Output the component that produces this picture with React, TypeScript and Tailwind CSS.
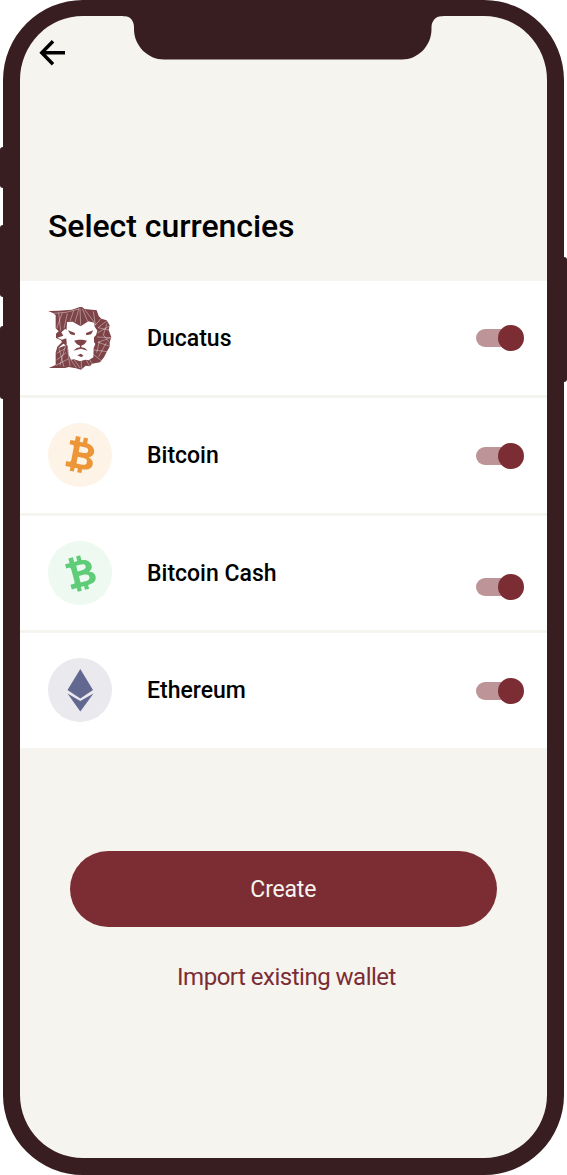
import type { ReactNode } from 'react';

function Lion() {
  return (
    <svg viewBox="24 36 192 192" className="size-16 shrink-0">
      <path
        fill="#7d4347"
        d="M25 51L56 50L96 47L119 39L126 39L134 45L170 49L176 66L184 74L200 79L209 94L206 108L214 130L209 144V158L200 174L192 190L180 205L156 209L150 217L137 215L123 227L108 223L86 219L75 222H26L47 213V176L52 158L66 144L62 138L48 132V119L56 112L47 103V64L40 58Z"
      />
      <g fill="#fff">
        <path d="M81 84L98 83L122 97L145 82L163 86V96L172 110L168 124L162 130V144L166 150L161 162L160 190L146 199L136 197L120 202L102 196L93 197L86 182L84 160L80 150V130L76 116L80 104Z" />
        <path d="M76 104L64 115L70 125L52 131L66 137L79 133L82 150L77 154L70 149L54 163L72 156L82 152L80 110Z" />
      </g>
      <g fill="#7d4347">
        <path d="M84 109L105 117L104 124L91 121Z" />
        <path d="M160 109L138 117L139 124L153 121Z" />
        <path d="M102 140L115 137H128L141 140L133 151L124 155V160L134 162L143 170L123 164L100 170L110 162L120 160V155L111 151Z" />
        <path d="M112 184L123 179L131 186L123 189Z" />
      </g>
      <g fill="none" stroke="#fff" strokeWidth="1.9" opacity=".62">
        <path d="M40 58L78 55L116 45M67 56L50 103M56 56L62 110M82 58L72 103M101 50L90 82M117 43L105 84M120 43L122 95M127 44L143 82M134 47L162 84M160 52L166 93M182 75L163 96M200 81L174 101L207 108M172 117L209 96M171 129L212 131L174 145L207 156M201 88L190 123L206 143M178 142L170 176M199 146L176 188M162 168L202 173M160 181L184 200M150 198L155 209M139 199L149 216M124 201V224M103 198L120 222M92 197L109 221M82 160L90 217M76 156L60 214M50 178L75 164M50 198L78 176M57 163L72 219M48 214L86 194" />
      </g>
    </svg>
  );
}

function BitcoinGlyph() {
  return (
    <path
      fillRule="evenodd"
      d="M-9 -18H-4V-13H-.500V-18H4V-13C10 -12 13 -9 13 -5C13 -2 11 0 8.500 1C12 2 14 4 14 7C14 12 10 14 4 14V18H-.500V14H-4V18H-8.500V14H-14V9H-11C-9.500 9 -9 8.500 -9 7V-6C-9 -8 -10 -8.500 -11 -8.500H-14V-13H-9ZM-3 -8.500V-2.500H1C4.500 -2.500 6.500 -3 6.500 -5.500C6.500 -8 4.500 -8.500 1 -8.500ZM-3 2.500V9.500H2C6 9.500 7.500 8.500 7.500 6C7.500 3.500 6 2.500 2 2.500Z"
    />
  );
}

function Bitcoin() {
  return (
    <svg viewBox="0 0 64 64" className="size-16 shrink-0">
      <circle cx="32" cy="32" r="32" fill="#fdf3e7" />
      <g transform="translate(33 32) rotate(11) scale(.95 .98)" fill="#ec9638"><BitcoinGlyph /></g>
    </svg>
  );
}

function BitcoinCash() {
  return (
    <svg viewBox="0 0 64 64" className="size-16 shrink-0">
      <circle cx="32" cy="32" r="32" fill="#edf9f1" />
      <g transform="translate(33 32) rotate(-15) scale(.94 .96)" fill="#5fcc78"><BitcoinGlyph /></g>
    </svg>
  );
}

function Ethereum() {
  return (
    <svg viewBox="0 0 64 64" className="size-16 shrink-0">
      <circle cx="32" cy="32" r="32" fill="#eae9ee" />
      <path d="M32.300 11L45 32L32.300 40.500L19.500 32Z" fill="#626890" />
      <path d="M19.500 35.500L32.300 43L45.500 35.500L32.300 53.500Z" fill="#626890" />
    </svg>
  );
}

function Toggle() {
  return (
    <div className="flex h-[27px] w-12 items-center justify-end rounded-full">
      <div className="-mr-[13px] h-[18px] w-[35px] rounded-l-full bg-[#bd9497]" />
      <div className="size-[26px] shrink-0 rounded-full bg-[#7c2d34]" />
    </div>
  );
}

function Row({ icon, name, low }: { icon: ReactNode; name: string; low?: boolean }) {
  return (
    <li className="flex h-[114.500px] items-center bg-white pr-[23px] pl-7">
      {icon}
      <span className="ml-[35px] flex-1 pt-0.5 text-[23px] leading-7 font-medium text-black">{name}</span>
      <div className={low ? 'pt-7' : 'pt-px'}><Toggle /></div>
    </li>
  );
}

export default function App() {
  return (
    <div className="relative h-[1175px] w-[567px] overflow-hidden bg-white font-['Roboto',sans-serif]">
      <div className="absolute top-[147px] left-0 h-[41px] w-2 rounded-l-[3px] bg-[#381e20]" />
      <div className="absolute top-[225px] left-0 h-[72px] w-2 rounded-l-[3px] bg-[#381e20]" />
      <div className="absolute top-[326px] left-0 h-[73px] w-2 rounded-l-[3px] bg-[#381e20]" />
      <div className="absolute top-[257px] right-0 h-[125px] w-2 rounded-r-[3px] bg-[#381e20]" />

      <div className="relative ml-[3px] flex h-[1174.500px] w-[561px] flex-col overflow-hidden rounded-[80px] border-[17px] border-t-16 border-[#381e20] bg-[#f6f4ef]">
        <header className="h-[264.500px]">
          <svg viewBox="0 0 28 28" className="mt-[23px] ml-[19px] size-7" fill="none" stroke="#000" strokeWidth="3.500">
            <path d="M26 13.800H3M14 2.300L2.800 13.800L14 25.300" />
          </svg>
          <h1 className="mt-[139px] ml-7 text-[32px] leading-10 font-medium tracking-[-0.05px] text-black">Select currencies</h1>
        </header>

        <ul className="flex flex-col gap-[3px]">
          <Row icon={<Lion />} name="Ducatus" />
          <Row icon={<Bitcoin />} name="Bitcoin" />
          <Row icon={<BitcoinCash />} name="Bitcoin Cash" low />
          <Row icon={<Ethereum />} name="Ethereum" />
        </ul>

        <div className="mt-[103.500px] flex flex-col items-center">
          <button className="mr-[0.5px] h-[76px] w-[427.500px] rounded-full bg-[#7c2d34] pt-0.5 text-[23px] tracking-[-0.2px] text-[#f6f4ef]">Create</button>
          <button className="mt-8 ml-1.5 h-9 text-[24px] leading-9 tracking-[-0.5px] text-[#7c2d34]">Import existing wallet</button>
        </div>
      </div>

      <svg viewBox="0 0 320 60" className="absolute top-0 left-[123px] h-[60px] w-[320px]">
        <path d="M0 16.300H2C7 16.300 11 21 11 27V29C11 46 25 59.500 41 59.500H279C295 59.500 308.500 46 308.500 29V27C308.500 21 313 16.300 318 16.300H320V10H0Z" fill="#381e20" />
      </svg>
    </div>
  );
}
